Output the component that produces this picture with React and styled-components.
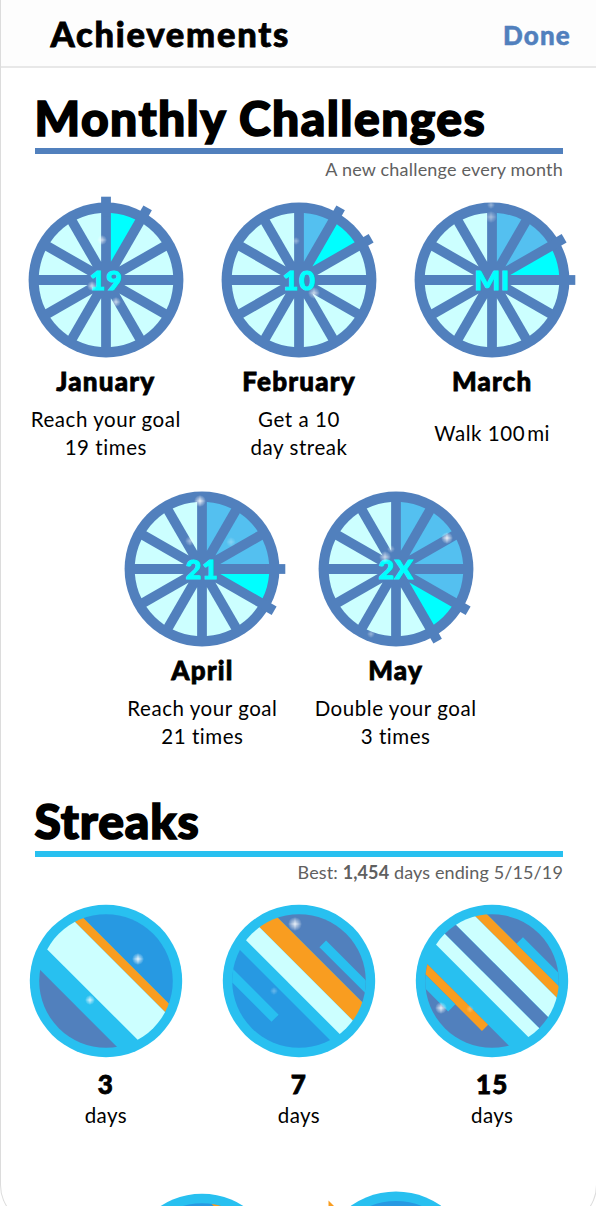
import React from "react";
import styled, { createGlobalStyle } from "styled-components";

const BLUE = "#5180bd";
const CYAN = "#28c0f0";
const SKY = "#2799e2";
const ICE = "#ccffff";
const ORANGE = "#f99d20";

const wedge = (i) => {
  // edges run parallel to the spokes, 4.9px off their centre lines
  const gap = 4.9;
  const r = 67.3;
  const half = Math.PI / 12;
  const tip = gap / Math.sin(half);
  const a = half - Math.asin(gap / r);
  const mid = (i * 30 + 15 - 90) * (Math.PI / 180);
  const p = (d, t) => `${d * Math.cos(t)} ${d * Math.sin(t)}`;
  return `M${p(tip, mid)} L${p(r, mid - a)} A${r} ${r} 0 0 1 ${p(r, mid + a)} Z`;
};

const Sparkle = ({ x, y, r = 5, o = 0.7 }) => (
  <g transform={`translate(${x} ${y})`} opacity={o}>
    <circle r={r} fill="url(#glow)" />
    <path
      d={`M0 ${-r} L.6 -.6 L${r} 0 L.6 .6 L0 ${r} L-.6 .6 L${-r} 0 L-.6 -.6Z`}
      fill="#fff"
      opacity=".5"
    />
  </g>
);

const Wheel = ({ month, label, sparkles }) => (
  <Badge viewBox="-86 -86 172 172">
    <circle r="77.4" fill={BLUE} />
    {[month, month + 1].map((n) => (
      <rect
        key={n}
        x="-4.9"
        y="-83.3"
        width="9.8"
        height="20"
        fill={BLUE}
        transform={`rotate(${n * 30})`}
      />
    ))}
    {Array.from({ length: 12 }, (_, i) => (
      <path
        key={i}
        d={wedge(i)}
        fill={i === month ? "#00ffff" : i < month ? "#54c0f0" : ICE}
      />
    ))}
    <WheelText x="0.2" y="9.8">{label}</WheelText>
    {sparkles.map((s, i) => (
      <Sparkle key={i} {...s} />
    ))}
  </Badge>
);

// bars are [y1, y2, colour, x1, x2] in a frame turned 45 degrees
const Stripes = ({ id, bars, sparkles = [], grow = 0, children }) => (
  <Badge viewBox="-86 -86 172 172">
    <clipPath id={id}>
      <circle r={66.8 + grow} />
    </clipPath>
    <circle r={76.2 + grow} fill={CYAN} />
    <g clipPath={`url(#${id})`}>
      <g transform="rotate(45)">
        {bars.map(([y1, y2, fill, x1 = -80, x2 = 80], i) => (
          <rect key={i} x={x1} y={y1} width={x2 - x1} height={y2 - y1} fill={fill} />
        ))}
      </g>
    </g>
    {children}
    {sparkles.map((s, i) => (
      <Sparkle key={i} {...s} />
    ))}
  </Badge>
);

const challenges = [
  {
    name: "January",
    lines: ["Reach your goal", "19 times"],
    label: "19",
    sparkles: [{ x: -4, y: -40 }, { x: -14, y: 6 }, { x: 10, y: 22 }],
  },
  {
    name: "February",
    lines: ["Get a 10", "day streak"],
    label: "10",
    sparkles: [{ x: -3, y: -39, r: 4, o: 0.4 }, { x: 15, y: 13, r: 6 }],
  },
  {
    name: "March",
    lines: [<React.Fragment key="mi">Walk 100<Thin />mi</React.Fragment>],
    label: "MI",
    sparkles: [{ x: -1, y: -63, r: 6, o: 0.5 }, { x: -1, y: -75, r: 4, o: 0.4 }],
  },
  {
    name: "April",
    lines: ["Reach your goal", "21 times"],
    label: "21",
    sparkles: [{ x: -2, y: -68, r: 6, o: 0.9 }, { x: -12, y: -28, o: 0.5 }, { x: 29, y: -27, o: 0.3 }],
  },
  {
    name: "May",
    lines: ["Double your goal", "3 times"],
    label: "2X",
    sparkles: [
      { x: 51, y: -31, r: 6, o: 0.9 },
      { x: -11, y: -12, r: 6 },
      { x: -5, y: -20, r: 4, o: 0.4 },
      { x: -25, y: 65, r: 4, o: 0.4 },
    ],
  },
];

const streaks = [
  {
    days: "3",
    bars: [
      [-80, -28.5, SKY],
      [-28.5, -19.8, ORANGE],
      [-19.8, 19.2, ICE],
      [38.8, 80, BLUE],
    ],
    sparkles: [{ x: 32, y: -22, r: 6, o: 0.9 }, { x: -16, y: 19, o: 0.8 }],
  },
  {
    days: "7",
    bars: [
      [-80, -29.7, BLUE],
      [-29.7, -10.1, ORANGE],
      [-10.1, 8.7, ICE],
      [19.8, 80, SKY],
      [-47.8, -38.4, CYAN, -9.5, 80],
      [38.2, 48.3, CYAN, -80, 9.4],
    ],
    sparkles: [{ x: -4, y: -57, r: 7, o: 0.9 }, { x: -25, y: 10, r: 4, o: 0.3 }],
  },
  {
    days: "15",
    bars: [
      [-80, -43.6, BLUE],
      [-43.6, -33.9, ORANGE],
      [-33.9, -14.1, ICE],
      [-14.1, 0, BLUE],
      [0, 13.9, ICE],
      [33.7, 80, BLUE],
      [33.7, 42.4, ORANGE, -80, 28.2],
      [42.4, 52.5, CYAN, -80, -9.5],
      [-52.8, -43.6, CYAN, -9, 80],
    ],
    sparkles: [{ x: -51, y: 27, r: 6, o: 0.9 }, { x: -22, y: 28, r: 4, o: 0.3 }],
  },
];

function App() {
  return (
    <Viewport>
      <GlobalStyle />
      <Screen>
        <Defs>
          <radialGradient id="glow">
            <stop offset="0" stopColor="#fff" stopOpacity=".9" />
            <stop offset="1" stopColor="#fff" stopOpacity="0" />
          </radialGradient>
        </Defs>
        <Header>
          <Title>Achievements</Title>
          <Done>Done</Done>
        </Header>
        <Section $top={22}>
          <Heading $spacing={1.45}>Monthly Challenges</Heading>
          <Rule $color={BLUE} />
          <Note $spacing={0.2}>A new challenge every month</Note>
        </Section>
        <Row $top={13}>
          {challenges.slice(0, 3).map((c, i) => (
            <Item key={c.name}>
              <Wheel month={i} label={c.label} sparkles={c.sparkles} />
              <Name>{c.name}</Name>
              <Goal>{c.lines.map((l, n) => <span key={n}>{l}</span>)}</Goal>
            </Item>
          ))}
        </Row>
        <Row $top={15}>
          {challenges.slice(3).map((c, i) => (
            <Item key={c.name}>
              <Wheel month={i + 3} label={c.label} sparkles={c.sparkles} />
              <Name>{c.name}</Name>
              <Goal>{c.lines.map((l, n) => <span key={n}>{l}</span>)}</Goal>
            </Item>
          ))}
        </Row>
        <Section $top={36}>
          <Heading $spacing={0.9}>Streaks</Heading>
          <Rule $color={CYAN} />
          <Note $spacing={0.12}>
            Best: <b>1,454</b> days ending 5/15/19
          </Note>
        </Section>
        <Row $top={11}>
          {streaks.map((s) => (
            <Item key={s.days}>
              <Stripes id={`streak${s.days}`} bars={s.bars} sparkles={s.sparkles} />
              <Name $top={2}>{s.days}</Name>
              <Days>days</Days>
            </Item>
          ))}
        </Row>
        <Row $top={53.5}>
          <Item>
            <Stripes id="streak4" bars={[[-80, 80, SKY], [-60, -53.5, ORANGE]]} />
          </Item>
          <Item>
            <Stripes id="streak5" grow={2.2} bars={[[-80, 80, SKY]]}>
              <path d="M-67.5 -69.5 L-67.5 -50 L-48 -50Z" fill={ORANGE} />
            </Stripes>
          </Item>
        </Row>
      </Screen>
    </Viewport>
  );
}

const GlobalStyle = createGlobalStyle`
  body {
    margin: 0;
    background: #fff;
    font-family: Lato, sans-serif;
    font-variant-ligatures: none;
    color: #000;
  }
`;

const Viewport = styled.div`
  width: 596px;
  height: 1206px;
  overflow: hidden;
`;

// the sheet is a little taller and wider than the viewport
const Screen = styled.div`
  box-sizing: border-box;
  width: 597px;
  height: 1225px;
  overflow: hidden;
  border: 1px solid #dcdcdc;
  border-top: 0;
  border-radius: 0 0 40px 40px;
`;

const Defs = styled.svg`
  position: absolute;
  width: 0;
  height: 0;
`;

const Header = styled.header`
  box-sizing: border-box;
  display: flex;
  align-items: center;
  justify-content: space-between;
  height: 68px;
  padding: 0 25px 0 49.5px;
  border-bottom: 2px solid #e8e8e8;
  background: #fdfdfd;
`;

const Title = styled.h1`
  margin: 0;
  font-size: 34.5px;
  font-weight: 900;
  letter-spacing: 1.75px;
  -webkit-text-stroke: 0.8px currentColor;
`;

const Done = styled.span`
  margin-top: 3px;
  color: ${BLUE};
  font-size: 26px;
  font-weight: 900;
  letter-spacing: 1.2px;
  -webkit-text-stroke: 0.5px currentColor;
`;

const Section = styled.section`
  display: flex;
  flex-direction: column;
  padding: ${(p) => p.$top}px 33px 0 33.5px;
`;

const Heading = styled.h2`
  margin: 0;
  height: 58px;
  line-height: 55px;
  font-size: 48px;
  font-weight: 900;
  letter-spacing: ${(p) => p.$spacing}px;
  -webkit-text-stroke: 1.6px currentColor;
  white-space: nowrap;
`;

const Rule = styled.div`
  height: 6px;
  background: ${(p) => p.$color};
`;

const Note = styled.p`
  align-self: flex-end;
  margin: 3px 0 0;
  height: 24px;
  line-height: 24px;
  font-size: 18px;
  color: #606060;
  letter-spacing: ${(p) => p.$spacing}px;
`;

const Row = styled.div`
  display: flex;
  justify-content: center;
  margin-top: ${(p) => p.$top}px;
  padding-left: 1px;
`;

const Item = styled.div`
  display: flex;
  flex-direction: column;
  align-items: center;
  width: 193.2px;
`;

const Badge = styled.svg`
  display: block;
  width: 172px;
  height: 172px;
  overflow: visible;
`;

const WheelText = styled.text`
  font-size: 27px;
  font-weight: 900;
  letter-spacing: 0.8px;
  text-anchor: middle;
  fill: #00ffff;
  stroke: #00ffff;
  stroke-width: 1px;
`;

const Name = styled.h3`
  margin: ${(p) => p.$top || 0}px 0 0;
  height: 31px;
  line-height: 30px;
  font-size: 26px;
  font-weight: 900;
  letter-spacing: 1.2px;
  -webkit-text-stroke: 0.8px currentColor;
`;

const Goal = styled.div`
  display: flex;
  flex-direction: column;
  align-items: center;
  justify-content: center;
  height: 71px;
  line-height: 28px;
  font-size: 20.5px;
  letter-spacing: 0.55px;
  white-space: nowrap;
`;

const Days = styled.div`
  height: 30px;
  line-height: 30px;
  font-size: 20.5px;
  letter-spacing: 0.4px;
`;

function Thin() {
  return <ThinGap />;
}

const ThinGap = styled.i`
  display: inline-block;
  width: 2px;
`;

export default App;
